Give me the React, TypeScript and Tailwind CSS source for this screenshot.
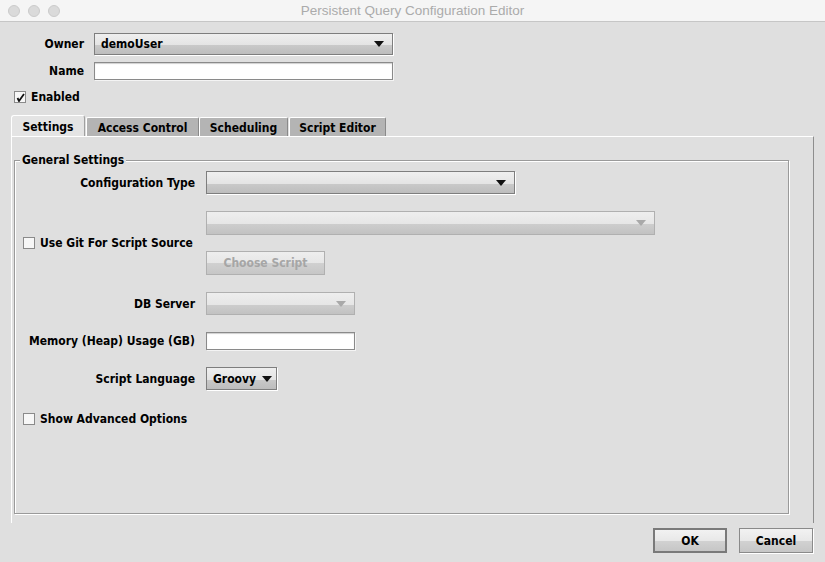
import type { ReactNode } from "react";

const font = "font-['DejaVu_Sans_Condensed','DejaVu_Sans',sans-serif]";

function Arrow({ disabled }: { disabled?: boolean }) {
  return (
    <svg width="10" height="6" viewBox="0 0 10 6" className="shrink-0">
      <path d="M0 0 H10 L5 6 Z" fill={disabled ? "#a9a9a9" : "#111"} />
    </svg>
  );
}

function Combo({ w, h, text, disabled }: { w: string; h: string; text?: string; disabled?: boolean }) {
  return (
    <div
      className={`${w} ${h} flex items-center justify-between gap-[6px] border pl-[6px] pr-[8px] ${
        disabled
          ? "border-[#b0b0b0] bg-[linear-gradient(to_bottom,#eeeeee_0%,#e6e6e6_55%,#cdcdcd_56%,#c2c2c2_100%)]"
          : "border-[#7e7e7e] bg-[linear-gradient(to_bottom,#efefef_0%,#e4e4e4_55%,#c9c9c9_56%,#bdbdbd_100%)] shadow-[1px_1px_0_#ffffff]"
      }`}
    >
      <span className="whitespace-nowrap text-[12px] font-bold text-black">{text}</span>
      <Arrow disabled={disabled} />
    </div>
  );
}

function Field({ w, h }: { w: string; h: string }) {
  return <div className={`${w} ${h} border border-[#8a8a8a] bg-white shadow-[inset_0_1px_1px_#d0d0d0,1px_1px_0_#f4f4f4]`} />;
}

function Check({ checked }: { checked?: boolean }) {
  return (
    <div className="flex h-[12px] w-[12px] shrink-0 items-center justify-center border border-[#8a8a8a] bg-[#f7f7f7]">
      {checked && (
        <svg width="9" height="9" viewBox="0 0 9 9">
          <path d="M1.5 5 L3 8 L8 1" stroke="#111" strokeWidth="1.8" fill="none" />
        </svg>
      )}
    </div>
  );
}

function Label({ children }: { children: ReactNode }) {
  return <div className="w-[172px] shrink-0 whitespace-nowrap text-right text-[12px] font-bold text-black">{children}</div>;
}

function Tab({ label, active, w }: { label: string; active?: boolean; w: string }) {
  return active ? (
    <div className={`${w} flex h-[21px] items-center justify-center rounded-t-[3px] border-l border-t border-r border-l-white border-t-white border-r-[#a0a0a0] bg-[#e4e4e4] pt-[1px] text-[12px] font-bold`}>
      {label}
    </div>
  ) : (
    <div className={`${w} mt-[2px] flex h-[19px] items-center justify-center rounded-t-[2px] border-l border-t border-r border-l-white border-t-white border-r-[#8a8a8a] bg-[#b4b4b4] pt-[1px] text-[12px] font-bold`}>
      {label}
    </div>
  );
}

function Button({ label, primary }: { label: string; primary?: boolean }) {
  return (
    <div
      className={`flex h-[25px] w-[74px] items-center justify-center bg-[linear-gradient(to_bottom,#f2f2f2_0%,#e8e8e8_50%,#d2d2d2_51%,#c6c6c6_100%)] text-[12px] font-bold ${
        primary ? "border-2 border-[#7a7a7a]" : "border border-[#8a8a8a] shadow-[1px_1px_0_#ffffff]"
      }`}
    >
      {label}
    </div>
  );
}

export default function App() {
  return (
    <div className={`flex h-[562px] w-[825px] flex-col overflow-hidden bg-[#dfdfdf] leading-[14px] text-black ${font}`}>
      {/* title bar */}
      <div className="relative flex h-[22px] shrink-0 items-center border-b border-[#c6c6c6] bg-[#f5f5f5] font-['Liberation_Sans',sans-serif]">
        <div className="absolute left-[8px] top-[5px] flex gap-[8px]">
          <div className="h-[12px] w-[12px] rounded-full border border-[#cbcbcb] bg-[#dadada]" />
          <div className="h-[12px] w-[12px] rounded-full border border-[#cbcbcb] bg-[#dadada]" />
          <div className="h-[12px] w-[12px] rounded-full border border-[#cbcbcb] bg-[#dadada]" />
        </div>
        <div className="w-full text-center text-[13.5px] text-[#ababab]">Persistent Query Configuration Editor</div>
      </div>

      {/* owner / name */}
      <div className="mt-[11px] flex h-[22px] items-center gap-[10px]">
        <div className="w-[84px] text-right text-[12px] font-bold">Owner</div>
        <Combo w="w-[299px]" h="h-[22px]" text="demoUser" />
      </div>
      <div className="mt-[7px] flex h-[18px] items-center gap-[10px]">
        <div className="w-[84px] text-right text-[12px] font-bold">Name</div>
        <Field w="w-[299px]" h="h-[18px]" />
      </div>
      <div className="mt-[11px] flex h-[12px] items-center gap-[5px] pl-[14px]">
        <Check checked />
        <span className="text-[12px] font-bold">Enabled</span>
      </div>

      {/* tabs */}
      <div className="mt-[12px] flex h-[21px] pl-[11px]">
        <Tab label="Settings" active w="w-[74px]" />
        <div className="w-[1px]" />
        <Tab label="Access Control" w="w-[113px]" />
        <Tab label="Scheduling" w="w-[89px]" />
        <div className="w-[1px]" />
        <Tab label="Script Editor" w="w-[97px]" />
      </div>

      <div className="ml-[11px] flex h-[387px] w-[803px] shrink-0 flex-col border-l border-t border-r border-l-white border-t-white border-r-[#8e8e8e] pl-[2px] pr-[24px] pt-[23px]">
        <div className="relative h-[354px] border border-[#9a9a9a] shadow-[inset_1px_1px_0_#ffffff,1px_1px_0_#ffffff]">
          <div className="absolute -top-[8px] left-[5px] bg-[#dfdfdf] px-[2px] text-[12px] font-bold">General Settings</div>

          <div className="flex flex-col pl-[8px] pt-[10px]">
            <div className="flex h-[23px] items-center gap-[11px]">
              <Label>Configuration Type</Label>
              <Combo w="w-[309px]" h="h-[23px]" />
            </div>

            <div className="mt-[17px] flex items-center gap-[11px]">
              <div className="flex w-[172px] items-center gap-[5px]">
                <Check />
                <span className="whitespace-nowrap text-[12px] font-bold">Use Git For Script Source</span>
              </div>
              <div className="flex flex-col gap-[16px]">
                <Combo w="w-[449px]" h="h-[24px]" disabled />
                <div className="flex h-[24px] w-[119px] items-center justify-center border border-[#b0b0b0] bg-[linear-gradient(to_bottom,#eeeeee_0%,#e6e6e6_50%,#d0d0d0_51%,#c6c6c6_100%)] text-[12px] font-bold text-[#a6a6a6]">
                  Choose Script
                </div>
              </div>
            </div>

            <div className="mt-[17px] flex h-[23px] items-center gap-[11px]">
              <Label>DB Server</Label>
              <Combo w="w-[149px]" h="h-[23px]" disabled />
            </div>

            <div className="mt-[17px] flex h-[18px] items-center gap-[11px]">
              <Label>Memory (Heap) Usage (GB)</Label>
              <Field w="w-[149px]" h="h-[18px]" />
            </div>

            <div className="mt-[17px] flex h-[23px] items-center gap-[11px]">
              <Label>Script Language</Label>
              <Combo w="w-[71px]" h="h-[23px]" text="Groovy" />
            </div>

            <div className="mt-[23px] flex h-[12px] items-center gap-[5px]">
              <Check />
              <span className="text-[12px] font-bold">Show Advanced Options</span>
            </div>
          </div>
        </div>
      </div>

      <div className="mt-[5px] flex justify-end gap-[12px] pr-[12px]">
        <Button label="OK" primary />
        <Button label="Cancel" />
      </div>
    </div>
  );
}
